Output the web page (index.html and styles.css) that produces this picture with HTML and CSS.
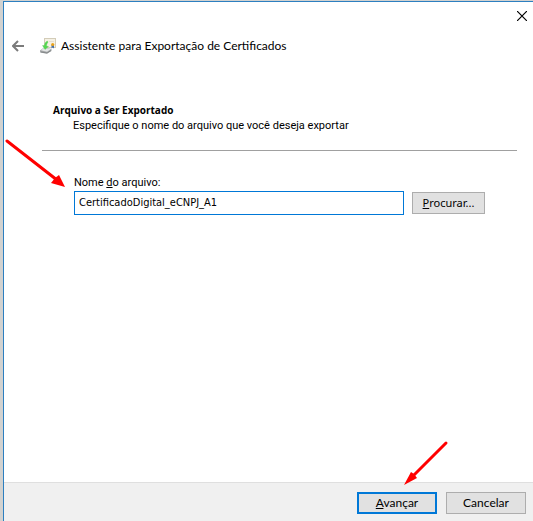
FILE: index.html
```html
<!DOCTYPE html>
<html lang="pt-BR">
<head>
<meta charset="utf-8">
<meta name="viewport" content="width=device-width, initial-scale=1">
<title>Assistente para Exportação de Certificados</title>
<link rel="stylesheet" href="styles.css">
</head>
<body>
<form class="wizard">
  <div class="titlebar">
    <button class="icon-button close" type="button" aria-label="Fechar">
      <svg width="10" height="10" viewBox="0 0 10 10"><path d="M0 0L10 10M10 0L0 10" stroke="#000" stroke-width="1.2"/></svg>
    </button>
  </div>
  <header class="heading">
    <button class="icon-button" type="button" aria-label="Voltar">
      <svg width="13" height="12" viewBox="0 0 13 12"><path d="M6 1L1 6L6 11M1 6H12" fill="none" stroke="#7b7b7b" stroke-width="2"/></svg>
    </button>
    <svg class="certificate" width="16" height="16" viewBox="0 0 16 16" aria-hidden="true">
      <rect x="4.5" y=".5" width="11" height="9" fill="#f5f1e4" stroke="#d3ccb8"/>
      <path d="M9 3.500h5" stroke="#e6dfcf"/>
      <path d="M11.500 7v3.500l1.200-1 1.300 1V7z" fill="#456fa8"/>
      <circle cx="12.700" cy="6.500" r="1.600" fill="#eaa21b"/>
      <path d="M0 12.500L4 9.500L11.500 11V13L7 15.800L0 14.500z" fill="#a4a7a8"/>
      <path d="M.8 12.200L4.200 9.800L10.800 11.200L7 13.800z" fill="#e4e6e6"/>
      <path d="M1 14L7 15L11 12.500" fill="none" stroke="#777b7c" stroke-width=".7"/>
      <path d="M7.500 3C5.500 3.500 4.500 5.500 4.500 7.500L2.500 7.500L5 11.500L8.500 8.500L6.500 8C6.600 6.500 7 5 8 4.500z" fill="#55d850" stroke="#4cc24c" stroke-width=".3"/>
    </svg>
    <h1 class="title">Assistente para Exportação de Certificados</h1>
  </header>
  <section class="intro">
    <h2 class="step-title">Arquivo a Ser Exportado</h2>
    <p class="step-text">Especifique o nome do arquivo que você deseja exportar</p>
  </section>
  <main class="content">
    <label class="label" for="file">Nome <u>d</u>o arquivo:</label>
    <div class="file-row">
      <input class="file-input" id="file" type="text" value="CertificadoDigital_eCNPJ_A1">
      <button class="button browse" type="button"><u>P</u>rocurar...</button>
    </div>
    <svg class="arrow arrow-field" width="62" height="52" viewBox="0 0 62 52" aria-hidden="true">
      <path d="M2 3L52 42" stroke="#f00" stroke-width="3" stroke-linecap="round"/>
      <path d="M60 49L46 45L50 40L54 37z" fill="#f00"/>
    </svg>
  </main>
  <footer class="actions">
    <button class="button primary" type="button"><u>A</u>vançar</button>
    <button class="button" type="button">Cancelar</button>
    <svg class="arrow arrow-next" width="46" height="46" viewBox="0 0 46 46" aria-hidden="true">
      <path d="M43 3L11 35" stroke="#f00" stroke-width="3" stroke-linecap="round"/>
      <path d="M1 45L8 32L11 34L14 38z" fill="#f00"/>
    </svg>
  </footer>
</form>
</body>
</html>
```
FILE: styles.css
```css
* {
  box-sizing: border-box;
}

body {
  margin: 0;
  padding: 1px 0 0 3px;
  min-height: 100vh;
  display: flex;
  background: #d2d2d0;
  color: #000;
  font: 11px/16px Roboto, sans-serif;
}

h1,
h2,
p {
  margin: 0;
}

button,
input {
  font: inherit;
  color: inherit;
}

.wizard {
  flex: 1;
  display: flex;
  flex-direction: column;
  min-width: 0;
  border: solid #2d7fc0;
  border-width: 1px 0 0 1px;
  background: #fff;
}

.titlebar {
  display: flex;
  justify-content: flex-end;
  padding: 8px 5px 0 0;
}

.icon-button {
  display: flex;
  padding: 0;
  border: 0;
  background: none;
}

.close {
  padding: 1px;
}

.heading {
  display: flex;
  align-items: center;
  padding: 16px 8px 0;
}

.certificate {
  margin: 0 5px 0 15px;
}

.title {
  font: 12px/16px Lato, sans-serif;
}

.intro {
  margin: 48px 16px 0 38px;
  padding: 0 0 16px 11px;
  border-bottom: 1px solid #a0a0a0;
}

.step-title {
  font: bold 10px/16px "Open Sans", sans-serif;
}

.step-text {
  padding-left: 20px;
}

.content {
  position: relative;
  flex: 1;
  padding: 24px 48px 24px 70px;
}

.label {
  display: block;
}

.file-row {
  display: flex;
  align-items: center;
  gap: 8px;
}

.file-input {
  flex: 1;
  min-width: 0;
  height: 24px;
  padding: 0 4px 2px;
  border: 1px solid #0078d7;
  border-radius: 0;
  background: #fff;
  font: 11px/16px "DejaVu Sans Condensed", "DejaVu Sans", sans-serif;
  outline: 0;
}

.button {
  width: 80px;
  height: 22px;
  padding: 0;
  border: 1px solid #adadad;
  background: #e1e1e1;
  font: 12px/16px Lato, sans-serif;
}

.browse {
  width: 73px;
  font: 11px/16px "Noto Sans", sans-serif;
}

.primary {
  border: 2px solid #0078d7;
}

.actions {
  position: relative;
  display: flex;
  justify-content: flex-end;
  gap: 9px;
  padding: 9px 7px 7px;
  border-top: 1px solid #dfdfdf;
  background: #f0f0f0;
}

.arrow {
  position: absolute;
  pointer-events: none;
}

.arrow-field {
  top: -13px;
  left: 1px;
}

.arrow-next {
  right: 84px;
  bottom: 35px;
}
```
